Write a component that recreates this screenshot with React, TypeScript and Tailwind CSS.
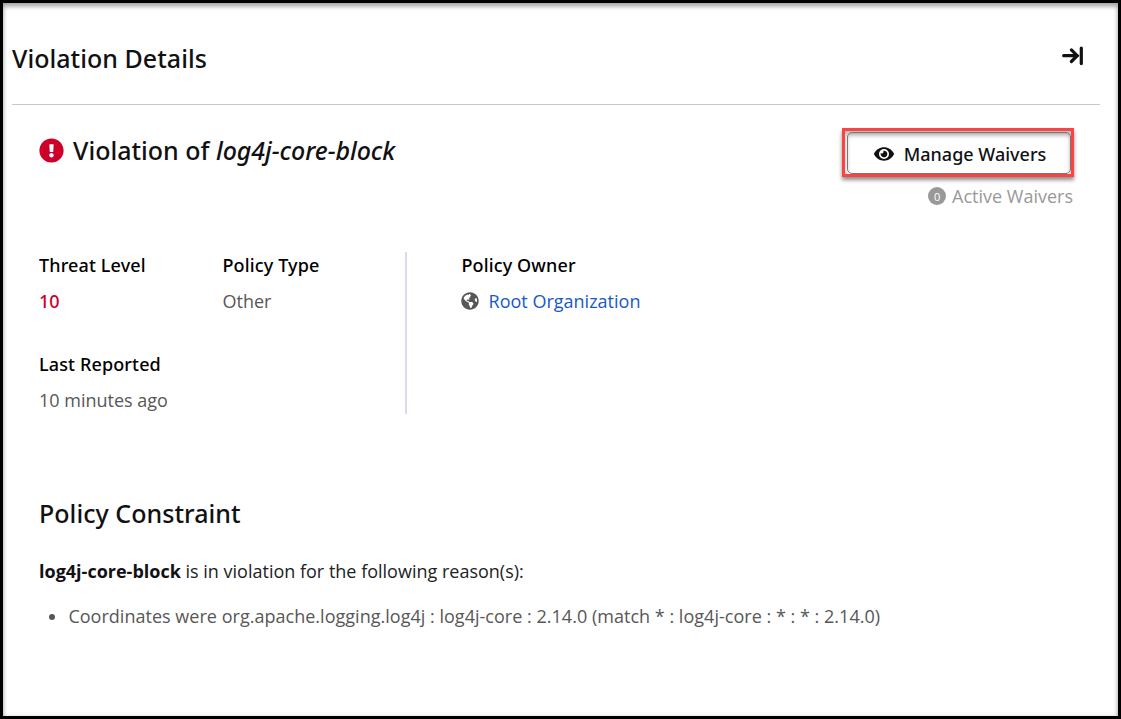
import React from "react";
import { FaExclamationCircle, FaEye, FaGlobeAmericas } from "react-icons/fa";

function CollapseIcon() {
  return (
    <svg width="22" height="20" viewBox="0 0 22 20" fill="none" stroke="#111114" strokeWidth="3.2">
      <path d="M1.7 9.7H15" strokeLinecap="round" />
      <path d="M9.4 3.9L15.2 9.7L9.4 15.5" strokeLinecap="round" strokeLinejoin="miter" />
      <path d="M19.3 2V17.6" strokeLinecap="round" />
    </svg>
  );
}

function Field({ label, children }: { label: string; children: React.ReactNode }) {
  return (
    <div className="flex flex-col gap-3 whitespace-nowrap leading-6">
      <div className="font-['Noto_Sans','Open_Sans',sans-serif] text-[18px] font-medium tracking-[0.14px] text-black">{label}</div>
      <div className="text-[#575757]">{children}</div>
    </div>
  );
}

export default function App() {
  return (
    <div className="h-[719px] w-[1121px] overflow-hidden border-3 border-black bg-white font-['Open_Sans','Noto_Sans',sans-serif] text-[18px]">
      <div className="flex h-full flex-col pl-[9px] pr-[18px] shadow-[inset_0_4px_4px_0_rgba(0,0,0,0.26),inset_0_1px_5px_rgba(0,0,0,0.2)]">
        <header className="flex h-[102px] shrink-0 items-start justify-between border-b border-[#c8c8c8] pr-4">
          <h1 className="mt-[37px] font-['Noto_Sans','Open_Sans',sans-serif] text-[25px] font-medium leading-9 tracking-[0.03px] text-[#111114]">Violation Details</h1>
          <div className="mt-[43px]">
            <CollapseIcon />
          </div>
        </header>
        <main className="flex flex-col pl-[27px] pr-[26px]">
          <section className="flex h-[147px] items-start justify-between">
            <h2 className="mt-[27px] flex items-center gap-[9px] font-['Noto_Sans','Open_Sans',sans-serif] text-[25px] font-medium leading-9 text-[#111114]">
              <FaExclamationCircle className="size-[25px] text-[#ce0029]" />
              <span>
                Violation of <em className="tracking-[-0.06px]">log4j-core-block</em>
              </span>
            </h2>
            <div className="mt-[23px] flex flex-col items-end">
              <div className="h-[49px] w-[232px] border-3 border-[#fc4343] pl-[2px] pt-[1px] shadow-[0_3px_4px_rgba(0,0,0,0.45),inset_0_3px_4px_rgba(0,0,0,0.3)]">
                <button className="flex h-[42px] w-[224px] items-center justify-center gap-[10px] rounded-[5px] border border-[#777] pl-[2px] pt-[2px] font-['Noto_Sans','Open_Sans',sans-serif] text-[18px] font-medium text-[#111114] shadow-[inset_0_3px_4px_rgba(0,0,0,0.14)]">
                  <FaEye className="size-5" />
                  Manage Waivers
                </button>
              </div>
              <div className="mr-px mt-[7px] flex items-center gap-[6px] leading-6 text-[#999]">
                <span className="flex size-[18px] items-center justify-center rounded-full bg-[#999] text-[11px] leading-none text-white">0</span>
                Active Waivers
              </div>
            </div>
          </section>
          <section className="flex h-[162px]">
            <div className="grid w-[368px] grid-cols-[183.5px_1fr] grid-rows-[99px_1fr] border-r-2 border-[#d9dcf0] pt-[1px]">
              <Field label="Threat Level">
                <span className="font-['Noto_Sans','Open_Sans',sans-serif] text-[18px] font-medium text-[#ce0029]">10</span>
              </Field>
              <Field label="Policy Type">Other</Field>
              <Field label="Last Reported">10 minutes ago</Field>
            </div>
            <div className="pl-[54.4px] pt-[1px]">
              <Field label="Policy Owner">
                <span className="flex items-center gap-[9.2px]">
                  <FaGlobeAmericas className="size-[18px] text-[#575757]" />
                  <a className="text-[#1659c7]">Root Organization</a>
                </span>
              </Field>
            </div>
          </section>
          <section className="mt-[81px] whitespace-nowrap">
            <h2 className="font-['Noto_Sans','Open_Sans',sans-serif] text-[25px] font-medium leading-9 tracking-[0.04px] text-[#111114]">Policy Constraint</h2>
            <p className="mt-[28px] leading-6 text-[#222]">
              <b className="text-[#111114]">log4j-core-block</b> is in violation for the following reason(s):
            </p>
            <ul className="mt-[21px] list-disc pl-[29.4px] leading-6 tracking-[0.02px] text-[#575757]">
              <li>Coordinates were org.apache.logging.log4j : log4j-core : 2.14.0 (match * : log4j-core : * : * : 2.14.0)</li>
            </ul>
          </section>
        </main>
      </div>
    </div>
  );
}
